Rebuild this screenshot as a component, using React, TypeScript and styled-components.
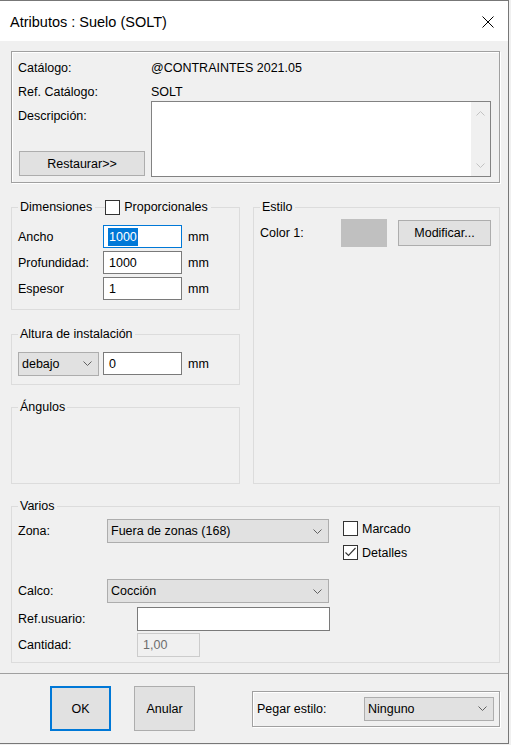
import React from 'react'
import styled, { createGlobalStyle } from 'styled-components'

const GlobalStyle = createGlobalStyle`
  html, body {
    margin: 0;
    padding: 0;
    background: #f0f0f0;
  }
  body {
    font-family: "Liberation Sans", Arial, sans-serif;
    font-size: 12.5px;
    color: #000;
  }
`

const Window = styled.div`
  box-sizing: border-box;
  width: 509px;
  height: 744px;
  display: flex;
  flex-direction: column;
  background: #f0f0f0;
  border: 1px solid #777;
  border-left: none;
`

const TitleBar = styled.div`
  height: 40px;
  flex: none;
  background: #fff;
  display: flex;
  align-items: center;
  justify-content: space-between;
  padding: 1px 14px 0 10px;
  box-sizing: border-box;
`

const Title = styled.span`
  font-size: 14.5px;
`

const CloseIcon = styled.svg`
  display: block;
`

const Content = styled.div`
  padding: 10px 8px 0 11px;
`

const Etched = styled.div`
  border: 1px solid #a0a0a0;
  box-shadow: inset 1px 1px 0 #fff, 1px 1px 0 #fff;
`

const CatalogPanel = styled(Etched)`
  display: grid;
  grid-template-columns: 133px 340px;
  grid-template-rows: 24px 21px 76px;
  padding: 4px 8px 5px 6px;
`

const InfoText = styled.div`
  line-height: 24px;
  white-space: nowrap;
`

const DescriptionCell = styled.div`
  display: flex;
  flex-direction: column;
  justify-content: space-between;
`

const DescriptionLabel = styled.div`
  padding-top: 8px;
  line-height: 14px;
`

const Button = styled.div<{ $width: number; $height: number; $default?: boolean }>`
  box-sizing: border-box;
  width: ${p => p.$width}px;
  height: ${p => p.$height}px;
  background: #e1e1e1;
  border: ${p => (p.$default ? '2px solid #0078d7' : '1px solid #adadad')};
  display: flex;
  align-items: center;
  justify-content: center;
  flex: none;
`

const RestoreButton = styled(Button)`
  margin: 0 0 1px 1px;
`

const CancelButton = styled(Button)`
  margin-left: 23px;
`

const Memo = styled.div`
  box-sizing: border-box;
  border: 1px solid #828282;
  background: #fff;
  display: flex;
`

const MemoBody = styled.div`
  flex: 1;
`

const MemoScroll = styled.div`
  width: 19px;
  background: #f0f0f0;
  display: flex;
  flex-direction: column;
  align-items: center;
  justify-content: space-between;
  padding: 9px 0 8px;
`

const Middle = styled.div`
  display: grid;
  grid-template-columns: 229px 247px;
  column-gap: 13px;
  height: 285px;
  margin-top: 16px;
`

const Column = styled.div`
  display: flex;
  flex-direction: column;
`

const Group = styled.fieldset<{ $pad?: string; $gap?: number; $grow?: boolean }>`
  margin: ${p => p.$gap ?? 0}px 0 0 0;
  padding: ${p => p.$pad ?? '0 6px'};
  border: 1px solid #dcdcdc;
  min-width: 0;
  box-sizing: border-box;
  ${p => (p.$grow ? 'flex: 1;' : '')}
`

const Legend = styled.legend`
  padding: 0 2px;
  height: 16px;
  line-height: 16px;
  display: flex;
  align-items: center;
  white-space: nowrap;
`

const LegendRule = styled.span`
  width: 10px;
  height: 1px;
  background: #dcdcdc;
  margin: 0 0 0 3px;
`

const CheckLabel = styled.label`
  display: flex;
  align-items: center;
  gap: 4px;
  padding-right: 1px;
`

const Box = styled.span`
  box-sizing: border-box;
  width: 15px;
  height: 15px;
  border: 1px solid #333;
  background: #fff;
  display: inline-flex;
  align-items: center;
  justify-content: center;
  flex: none;
`

const FieldRows = styled.div`
  display: flex;
  flex-direction: column;
  gap: 3px;
`

const FieldRow = styled.div`
  display: flex;
  align-items: center;
  height: 23px;
`

const RowLabel = styled.span<{ $width: number }>`
  width: ${p => p.$width}px;
  flex: none;
`

const Field = styled.div<{ $width: number; $height?: number; $focused?: boolean; $disabled?: boolean }>`
  box-sizing: border-box;
  width: ${p => p.$width}px;
  height: ${p => p.$height ?? 23}px;
  flex: none;
  display: flex;
  align-items: center;
  padding-left: ${p => (p.$focused ? 4 : 5)}px;
  background: ${p => (p.$disabled ? '#f0f0f0' : '#fff')};
  color: ${p => (p.$disabled ? '#6d6d6d' : '#000')};
  border: 1px solid
    ${p => (p.$focused ? '#0078d7' : p.$disabled ? '#cccccc' : '#7a7a7a')};
`

const Selected = styled.span`
  background: #0078d7;
  color: #fff;
  line-height: 18px;
  padding: 0 1px;
`

const Unit = styled.span`
  margin-left: 6px;
`

const Combo = styled.div<{ $width: number; $gap?: number }>`
  box-sizing: border-box;
  width: ${p => p.$width}px;
  height: 24px;
  flex: none;
  background: #e1e1e1;
  border: 1px solid #adadad;
  display: flex;
  align-items: center;
  justify-content: space-between;
  padding: 0 6px 0 3px;
  margin-right: ${p => p.$gap ?? 0}px;
`

const StyleRow = styled.div`
  display: flex;
  align-items: center;
  padding-top: 4px;
`

const Swatch = styled.div<{ $color: string }>`
  width: 46px;
  height: 28px;
  background: ${p => p.$color};
  margin-right: 11px;
`

const VariosGrid = styled.div`
  display: grid;
  grid-template-columns: 89px 222px 1fr;
  grid-template-rows: 60px 28px 26px 24px;
  align-items: start;
  padding: 5px 0 5px;
`

const GridLabel = styled.div`
  line-height: 24px;
`

const Indented = styled.div`
  padding-left: 30px;
`

const Checks = styled.div`
  padding-left: 14px;
  display: flex;
  flex-direction: column;
`

const CheckRow = styled.label`
  display: flex;
  align-items: flex-start;
  gap: 4px;
  height: 24px;
  line-height: 20px;
  & > span:first-child {
    margin-top: 2px;
  }
`

const Separator = styled.div`
  margin-top: 10px;
  height: 1px;
  background: #a0a0a0;
`

const Footer = styled.div`
  flex: 1;
  display: flex;
  align-items: center;
  padding-left: 50px;
`

const PasteFrame = styled(Etched)`
  box-sizing: border-box;
  width: 248px;
  height: 36px;
  margin-left: 57px;
  display: flex;
  align-items: center;
  padding-left: 4px;
`

const Chevron = ({ up, color = '#606060' }: { up?: boolean; color?: string }) => (
  <svg width="9" height="5" viewBox="0 0 9 5" style={{ display: 'block' }}>
    <polyline
      points={up ? '0.5,4.5 4.5,0.5 8.5,4.5' : '0.5,0.5 4.5,4.5 8.5,0.5'}
      fill="none"
      stroke={color}
      strokeWidth="1"
    />
  </svg>
)

const CheckBox = ({ checked }: { checked?: boolean }) => (
  <Box>
    {checked && (
      <svg width="13" height="13" viewBox="0 0 13 13">
        <polyline points="1.5,6.5 4.5,9.5 11.5,2" fill="none" stroke="#333" strokeWidth="1.1" />
      </svg>
    )}
  </Box>
)

const Select = ({ value, width, gap }: { value: string; width: number; gap?: number }) => (
  <Combo $width={width} $gap={gap}>
    <span>{value}</span>
    <Chevron />
  </Combo>
)

const dimensions = [
  { label: 'Ancho', value: '1000', focused: true },
  { label: 'Profundidad:', value: '1000' },
  { label: 'Espesor', value: '1' },
]

export default function App() {
  return (
    <>
      <GlobalStyle />
      <Window>
        <TitleBar>
          <Title>Atributos : Suelo (SOLT)</Title>
          <CloseIcon width="12" height="12" viewBox="0 0 12 12">
            <path d="M0.5 0.5 L11.5 11.5 M11.5 0.5 L0.5 11.5" stroke="#000" strokeWidth="1" fill="none" />
          </CloseIcon>
        </TitleBar>

        <Content>
          <CatalogPanel>
            <InfoText>Catálogo:</InfoText>
            <InfoText>@CONTRAINTES 2021.05</InfoText>
            <InfoText>Ref. Catálogo:</InfoText>
            <InfoText>SOLT</InfoText>
            <DescriptionCell>
              <DescriptionLabel>Descripción:</DescriptionLabel>
              <RestoreButton $width={126} $height={25}>Restaurar&gt;&gt;</RestoreButton>
            </DescriptionCell>
            <Memo>
              <MemoBody />
              <MemoScroll>
                <Chevron up color="#c2c2c2" />
                <Chevron color="#c2c2c2" />
              </MemoScroll>
            </Memo>
          </CatalogPanel>

          <Middle>
            <Column>
              <Group $pad="10px 6px 9px">
                <Legend>
                  Dimensiones
                  <LegendRule />
                  <CheckLabel>
                    <CheckBox />
                    Proporcionales
                  </CheckLabel>
                </Legend>
                <FieldRows>
                  {dimensions.map(d => (
                    <FieldRow key={d.label}>
                      <RowLabel $width={85}>{d.label}</RowLabel>
                      <Field $width={79} $focused={d.focused}>
                        {d.focused ? <Selected>{d.value}</Selected> : d.value}
                      </Field>
                      <Unit>mm</Unit>
                    </FieldRow>
                  ))}
                </FieldRows>
              </Group>

              <Group $pad="10px 6px 9px" $gap={16}>
                <Legend>Altura de instalación</Legend>
                <FieldRow>
                  <Select value="debajo" width={81} gap={4} />
                  <Field $width={79}>0</Field>
                  <Unit>mm</Unit>
                </FieldRow>
              </Group>

              <Group $gap={14} $grow>
                <Legend>Ángulos</Legend>
              </Group>
            </Column>

            <Group>
              <Legend>Estilo</Legend>
              <StyleRow>
                <RowLabel $width={81}>Color 1:</RowLabel>
                <Swatch $color="#c0c0c0" />
                <Button $width={93} $height={26}>Modificar...</Button>
              </StyleRow>
            </Group>
          </Middle>

          <Group $gap={14}>
            <Legend>Varios</Legend>
            <VariosGrid>
              <GridLabel>Zona:</GridLabel>
              <Select value="Fuera de zonas (168)" width={222} />
              <Checks>
                <CheckRow>
                  <CheckBox />
                  Marcado
                </CheckRow>
                <CheckRow>
                  <CheckBox checked />
                  Detalles
                </CheckRow>
              </Checks>

              <GridLabel>Calco:</GridLabel>
              <Select value="Cocción" width={222} />
              <span />

              <GridLabel>Ref.usuario:</GridLabel>
              <Indented>
                <Field $width={193} $height={24} />
              </Indented>
              <span />

              <GridLabel>Cantidad:</GridLabel>
              <Indented>
                <Field $width={63} $height={24} $disabled>1,00</Field>
              </Indented>
              <span />
            </VariosGrid>
          </Group>
        </Content>

        <Separator />

        <Footer>
          <Button $width={61} $height={45} $default>OK</Button>
          <CancelButton $width={61} $height={45}>Anular</CancelButton>
          <PasteFrame>
            <RowLabel $width={107}>Pegar estilo:</RowLabel>
            <Select value="Ninguno" width={130} />
          </PasteFrame>
        </Footer>
      </Window>
    </>
  )
}
